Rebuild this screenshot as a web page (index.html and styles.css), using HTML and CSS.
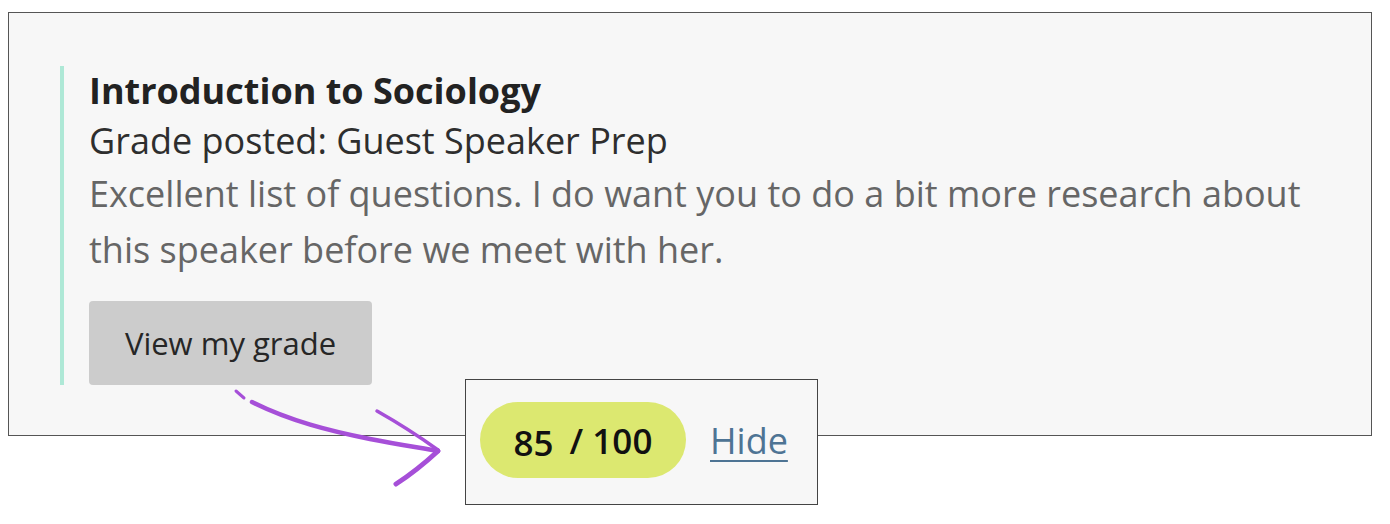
FILE: index.html
```html
<!DOCTYPE html>
<html lang="en">
<head>
    <meta charset="UTF-8">
    <meta name="viewport" content="width=device-width, initial-scale=1.0">
    <title>Grade Notification</title>
    <link rel="stylesheet" href="styles.css">
</head>
<body>
    <div class="stage">
        <div class="card">
            <div class="entry">
                <div class="course">Introduction to Sociology</div>
                <div class="posted">Grade posted: Guest Speaker Prep</div>
                <p class="comment">Excellent list of questions. I do want you to do a bit more research about this speaker before we meet with her.</p>
                <button type="button" class="grade-btn">View my grade</button>
            </div>
        </div>

        <!-- hand drawn arrow pointing at the revealed grade -->
        <svg class="arrow" width="230" height="110" viewBox="0 0 230 110">
            <g fill="none" stroke="#a64fd8" stroke-linecap="round" stroke-linejoin="round">
                <path d="M16 10 L24 17" stroke-width="3"/>
                <path d="M32 21 C70 40, 110 50, 150 58 C175 63, 195 66, 218 70" stroke-width="4.5"/>
                <path d="M157 30 C180 43, 200 56, 218 69" stroke-width="3.5"/>
                <path d="M218 70 C205 82, 190 94, 176 103" stroke-width="5"/>
            </g>
        </svg>

        <div class="reveal">
            <div class="pill"><span class="score">85</span><span class="total">/ 100</span></div>
            <a href="#" class="hide-link">Hide</a>
        </div>
    </div>
</body>
</html>
```

FILE: styles.css
```css
body {
    margin: 0;
    background: #fff;
    font-family: "Open Sans", Arial, sans-serif;
}
.stage {
    position: relative;
    width: 1390px;
    height: 524px;
    box-sizing: border-box;
    padding: 12px 0 0 8px;
}
.card {
    box-sizing: border-box;
    width: 1364px;
    border: 1px solid #555;
    background: #f7f7f7;
    padding: 53px 40px 50px 51px;
}
.entry {
    border-left: 4px solid #aee8d6;
    padding-left: 25px;
}
.course {
    font-size: 36px;
    font-weight: 700;
    line-height: 50px;
    color: #222;
}
.posted {
    font-size: 36px;
    line-height: 50px;
    color: #2e2e2e;
}
.comment {
    margin: 0;
    font-size: 36px;
    line-height: 56px;
    color: #666;
}
.grade-btn {
    display: block;
    margin-top: 23px;
    width: 283px;
    height: 84px;
    border: none;
    border-radius: 4px;
    background: #cccccc;
    font-family: "Open Sans", Arial, sans-serif;
    font-size: 31px;
    color: #262626;
    cursor: pointer;
}
.arrow {
    position: absolute;
    left: 220px;
    top: 381px;
}
.reveal {
    position: absolute;
    left: 465px;
    top: 379px;
    box-sizing: border-box;
    width: 353px;
    height: 126px;
    border: 1px solid #444;
    background: #f7f7f7;
    display: flex;
    align-items: center;
    padding: 0 0 4px 14px;
}
.pill {
    width: 206px;
    height: 76px;
    border-radius: 38px;
    background: #dce870;
    display: flex;
    align-items: center;
    justify-content: center;
    font-size: 35px;
    font-weight: 600;
    color: #111;
}
.score {
    margin-right: 16px;
    position: relative;
    top: 2px;
}
.hide-link {
    margin-left: 24px;
    font-size: 36px;
    color: #4e7494;
    text-decoration: underline;
    text-underline-offset: 6px;
    text-decoration-thickness: 2px;
}
```
